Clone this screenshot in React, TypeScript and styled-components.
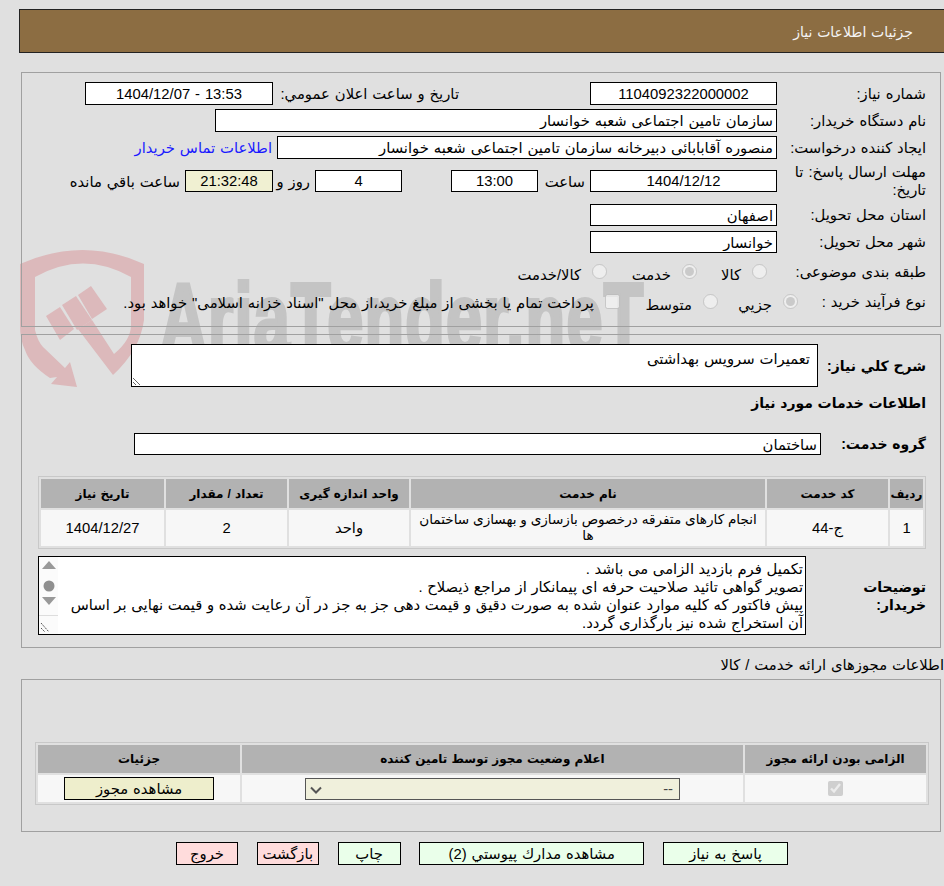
import React from "react";
import styled, { createGlobalStyle } from "styled-components";

const Global = createGlobalStyle`
  html {
    background: #e0e0e0;
  }
  html, body {
    margin: 0;
    height: 886px;
    overflow: hidden;
  }
  body {
    color: #000;
    font-family: "Liberation Sans", "DejaVu Sans", sans-serif;
    font-size: 14.8px;
    word-spacing: 0.8px;
  }
`;

const Page = styled.div`
  direction: rtl;
  width: 944px;
  height: 886px;
  padding-top: 9px;
  box-sizing: border-box;
`;

const Watermark = styled.div`
  position: absolute;
  left: 20px;
  top: 250px;
  width: 600px;
  height: 140px;
  z-index: -1;
  direction: ltr;
`;

const WatermarkText = styled.div`
  position: absolute;
  left: 140px;
  top: 19px;
  font: bold 98px/98px "Liberation Sans", sans-serif;
  color: #c4c4c4;
  -webkit-text-stroke: 4px #c4c4c4;
  letter-spacing: 2px;
  white-space: nowrap;
  transform: scaleX(0.66);
  transform-origin: left top;
`;

const Header = styled.div`
  height: 42px;
  margin-left: 19px;
  padding-right: 31px;
  font-size: 14px;
  line-height: 44px;
  background: #8c6d42;
  border: 1px solid #222;
  border-right: 0;
  color: #f4f4f4;
`;

const Panel = styled.div<{ $top: number; $height: number }>`
  box-sizing: border-box;
  height: ${(p) => p.$height}px;
  margin: ${(p) => p.$top}px 3px 0 21px;
  padding: 9px 14px 0 0;
  border: 1px solid #a0a0a0;
`;

const NeedPanel = styled(Panel)`
  padding-left: 16px;
`;

const PermitPanel = styled(Panel)`
  padding: 62px 11px 0 13px;
`;

const Row = styled.div<{ $height?: number; $mb?: number; $mt?: number }>`
  display: flex;
  align-items: center;
  height: ${(p) => p.$height ?? 23}px;
  margin-top: ${(p) => p.$mt ?? 0}px;
  margin-bottom: ${(p) => p.$mb ?? 4}px;
`;

const Label = styled.label<{ $width?: number; $mr?: number }>`
  flex: none;
  width: ${(p) => p.$width ?? 149}px;
  margin-right: ${(p) => p.$mr ?? 0}px;
  line-height: 18px;
`;

const BoldLabel = styled(Label)`
  font-size: 14px;
  font-weight: bold;
`;

const Text = styled.span<{ $mr?: number; $width?: number }>`
  flex: none;
  width: ${(p) => (p.$width ? `${p.$width}px` : "auto")};
  margin-right: ${(p) => p.$mr ?? 0}px;
  white-space: nowrap;
`;

const Link = styled(Text)`
  color: #1a1aff;
`;

const Field = styled.input<{
  $width: number;
  $center?: boolean;
  $bg?: string;
  $mr?: number;
}>`
  flex: none;
  box-sizing: border-box;
  width: ${(p) => p.$width}px;
  height: 100%;
  margin: 0 ${(p) => p.$mr ?? 0}px 0 0;
  padding: 0 3px;
  border: 1px solid #000;
  background: ${(p) => p.$bg ?? "#fff"};
  color: #000;
  font: inherit;
  word-spacing: inherit;
  text-align: ${(p) => (p.$center ? "center" : "right")};
  outline: none;
`;

const Options = styled.div<{ $mr?: number }>`
  display: flex;
  margin-right: ${(p) => p.$mr ?? 0}px;
`;

const Option = styled.label<{ $width: number }>`
  flex: none;
  display: flex;
  align-items: center;
  width: ${(p) => p.$width}px;
`;

const OptionText = styled(Text)`
  margin-top: 5px;
`;

const Radio = styled.input`
  flex: none;
  width: 15px;
  height: 15px;
  margin: 0 0 2px 11px;
`;

const Check = styled.input`
  flex: none;
  width: 15px;
  height: 15px;
  margin: 0 0 2px 11px;
`;

const CellCheck = styled.input`
  display: block;
  width: 15px;
  height: 15px;
  margin: 0 auto;
`;

const Note = styled.textarea`
  flex: none;
  box-sizing: border-box;
  width: 687px;
  height: 43px;
  margin-right: 5px;
  padding: 5px 7px;
  border: 1px solid #000;
  border-radius: 0;
  background: #fff;
  font: inherit;
  word-spacing: inherit;
  line-height: 18px;
  outline: none;
`;

const Heading = styled.div`
  height: 24px;
  font-size: 14px;
  font-weight: bold;
  line-height: 24px;
`;

const Grid = styled.table<{ $mt: number }>`
  width: 100%;
  margin-top: ${(p) => p.$mt}px;
  border: 1px solid #c8c8c8;
  border-spacing: 2px;
  table-layout: fixed;
  text-align: center;
`;

const Th = styled.th<{ $width?: number; $height?: number }>`
  width: ${(p) => (p.$width ? `${p.$width}px` : "auto")};
  height: ${(p) => p.$height ?? 29}px;
  padding: 0;
  background: #b2b2b2;
  font-size: 12px;
`;

const Td = styled.td`
  height: 36px;
  padding: 0 4px;
  background: #f7f7f7;
  line-height: 16px;
`;

const NameTd = styled(Td)`
  font-size: 13.6px;
  word-spacing: 0;
`;

const PermitTd = styled(Td)`
  height: 27px;
  padding: 0;
`;

const DescRow = styled.div`
  display: flex;
  align-items: center;
  margin-top: 7px;
`;

const DescBox = styled.div`
  flex: none;
  display: flex;
  box-sizing: border-box;
  width: 768px;
  height: 79px;
  border: 1px solid #000;
  background: #fff;
`;

const DescText = styled.div`
  flex: 1;
  padding: 3px 2px 0 0;
  line-height: 18px;
  word-spacing: 0.5px;
  white-space: nowrap;
  overflow: hidden;
`;

const Scroll = styled.div`
  flex: none;
  width: 19px;
  background: #fbfbfb;
`;

const ScrollIcons = styled.svg`
  display: block;
`;

const Section = styled.div`
  height: 18px;
  margin-top: 8px;
  line-height: 18px;
  white-space: nowrap;
`;

const SelectBox = styled.select`
  display: block;
  appearance: none;
  box-sizing: border-box;
  width: 375px;
  height: 22px;
  margin: 0 auto;
  padding: 0 6px;
  border: 1px solid #555;
  border-radius: 0;
  background-color: #f0f0dc;
  background-image: url("data:image/svg+xml,%3Csvg xmlns='http://www.w3.org/2000/svg' width='12' height='8'%3E%3Cpath d='M1 1.5L6 6.5L11 1.5' fill='none' stroke='%23555' stroke-width='2'/%3E%3C/svg%3E");
  background-repeat: no-repeat;
  background-position: 4px 7px;
  color: #444;
  font: inherit;
  opacity: 1;
`;

const PermitButton = styled.button`
  display: block;
  box-sizing: border-box;
  width: 150px;
  height: 23px;
  margin: 0 auto;
  padding: 0;
  border: 1px solid #000;
  background: #eeeecc;
  color: #000;
  font: inherit;
  word-spacing: inherit;
`;

const Actions = styled.div`
  display: flex;
  gap: 18.75px;
  margin: 10px 156px 0 0;
`;

const Action = styled.button<{ $width: number; $danger?: boolean }>`
  flex: none;
  box-sizing: border-box;
  width: ${(p) => p.$width}px;
  height: 23px;
  padding: 0;
  border: 1px solid #000;
  background: ${(p) => (p.$danger ? "#ffdcdc" : "#eaffea")};
  color: #000;
  font: inherit;
  word-spacing: inherit;
`;

export default function App() {
  return (
    <>
      <Global />
      <Page>
        <Watermark>
          <svg width="125" height="138" viewBox="20 250 125 138">
            <path
              fill="#dcb9bb"
              d="M20 264Q83 236 144 264L144 320Q140 350 113 375L78 329L92 320L114 354Q131 340 131 325L131 277Q83 250 35 277L35 330Q38 342 43 347L65 368L70 362L77 387L51 384L57 377L50 378Q30 365 25 350Q20 340 20 325Z"
            />
            <path fill="#dcb9bb" d="M46 316L60 307L74 329L60 340Z" />
            <path fill="#dcb9bb" d="M62 305L76 296L92 320L77 330Z" />
            <path fill="#dcb9bb" d="M78 295L91 286L107 309L92 319Z" />
          </svg>
          <WatermarkText>AriaTender.neT</WatermarkText>
        </Watermark>

        <Header>جزئیات اطلاعات نیاز</Header>

        <Panel $top={19} $height={255}>
          <Row>
            <Label>شماره نیاز:</Label>
            <Field readOnly $width={187} $center value="1104092322000002" />
            <Label $width={181} $mr={131}>
              تاریخ و ساعت اعلان عمومي:
            </Label>
            <Field readOnly $width={188} $mr={5} $center value="13:53 - 1404/12/07" />
          </Row>
          <Row>
            <Label>نام دستگاه خریدار:</Label>
            <Field readOnly $width={562} value="سازمان تامین اجتماعی شعبه خوانسار" />
          </Row>
          <Row $mb={11}>
            <Label>ایجاد کننده درخواست:</Label>
            <Field
              readOnly
              $width={500}
              value="منصوره آقابابائی دبیرخانه سازمان تامین اجتماعی شعبه خوانسار"
            />
            <Link $mr={5}>اطلاعات تماس خریدار</Link>
          </Row>
          <Row $height={22} $mb={12}>
            <Label>مهلت ارسال پاسخ: تا تاریخ:</Label>
            <Field readOnly $width={187} $center value="1404/12/12" />
            <Text $mr={5} $width={47}>ساعت</Text>
            <Field readOnly $width={87} $center value="13:00" />
            <Field readOnly $width={87} $mr={49} $center value="4" />
            <Text $mr={5} $width={37}>روز و</Text>
            <Field readOnly $width={88} $center $bg="#f0f0d2" value="21:32:48" />
            <Text $mr={5}>ساعت باقي مانده</Text>
          </Row>
          <Row $height={22} $mb={5}>
            <Label>استان محل تحویل:</Label>
            <Field readOnly $width={187} value="اصفهان" />
          </Row>
          <Row $height={22} $mb={8}>
            <Label>شهر محل تحویل:</Label>
            <Field readOnly $width={187} value="خوانسار" />
          </Row>
          <Row $height={22} $mb={8}>
            <Label>طبقه بندی موضوعی:</Label>
            <Options $mr={10}>
              <Option $width={70}>
                <Radio type="radio" disabled />
                <OptionText>کالا</OptionText>
              </Option>
              <Option $width={90}>
                <Radio type="radio" disabled checked readOnly />
                <OptionText>خدمت</OptionText>
              </Option>
              <Option $width={100}>
                <Radio type="radio" disabled />
                <OptionText>کالا/خدمت</OptionText>
              </Option>
            </Options>
          </Row>
          <Row $height={22} $mb={0}>
            <Label $width={128}>نوع فرآیند خرید :</Label>
            <Options>
              <Option $width={80}>
                <Radio type="radio" disabled checked readOnly />
                <OptionText>جزيي</OptionText>
              </Option>
              <Option $width={98}>
                <Radio type="radio" disabled />
                <OptionText>متوسط</OptionText>
              </Option>
              <Option $width={500}>
                <Check type="checkbox" disabled />
                <Text>پرداخت تمام یا بخشی از مبلغ خرید،از محل "اسناد خزانه اسلامی" خواهد بود.</Text>
              </Option>
            </Options>
          </Row>
        </Panel>

        <NeedPanel $top={7} $height={314}>
          <Row $height={43} $mb={4}>
            <BoldLabel $width={103}>شرح كلي نياز:</BoldLabel>
            <Note readOnly defaultValue="تعمیرات سرویس بهداشتی" />
          </Row>
          <Heading>اطلاعات خدمات مورد نياز</Heading>
          <Row $height={22} $mb={0} $mt={18}>
            <BoldLabel $width={105}>گروه خدمت:</BoldLabel>
            <Field readOnly $width={687} value="ساختمان" />
          </Row>
          <Grid $mt={21}>
            <thead>
              <tr>
                <Th $width={33}>رديف</Th>
                <Th $width={121}>کد خدمت</Th>
                <Th $width={354}>نام خدمت</Th>
                <Th $width={120}>واحد اندازه گيری</Th>
                <Th $width={121}>تعداد / مقدار</Th>
                <Th>تاريخ نياز</Th>
              </tr>
            </thead>
            <tbody>
              <tr>
                <Td>1</Td>
                <Td>ج-44</Td>
                <NameTd>انجام کارهای متفرقه درخصوص بازسازی و بهسازی ساختمان ها</NameTd>
                <Td>واحد</Td>
                <Td>2</Td>
                <Td>1404/12/27</Td>
              </tr>
            </tbody>
          </Grid>
          <DescRow>
            <BoldLabel $width={120}>
              توضيحات
              <br />
              خريدار:
            </BoldLabel>
            <DescBox>
              <DescText>
                تکمیل فرم بازدید الزامی می باشد .
                <br />
                تصویر گواهی تائید صلاحیت حرفه ای پیمانکار از مراجع ذیصلاح .
                <br />
                پیش فاکتور که کلیه موارد عنوان شده به صورت دقیق و قیمت دهی جز به جز در آن رعایت شده و قیمت نهایی بر اساس
                <br />
                آن استخراج شده نیز بارگذاری گردد.
              </DescText>
              <Scroll>
                <ScrollIcons width="19" height="77" viewBox="0 0 19 77">
                  <path d="M3 12L10 4L17 12Z" fill="#999" />
                  <circle cx="10" cy="29" r="5.5" fill="#8f8f8f" />
                  <path d="M3 40L17 40L10 48Z" fill="#999" />
                  <path d="M0 58.5H19" stroke="#ddd" />
                  <path d="M2 66L10 75M2 71L6 75" stroke="#555" strokeDasharray="2 1" />
                </ScrollIcons>
              </Scroll>
            </DescBox>
          </DescRow>
        </NeedPanel>

        <Section>اطلاعات مجوزهای ارائه خدمت / کالا</Section>

        <PermitPanel $top={5} $height={153}>
          <Grid $mt={0}>
            <thead>
              <tr>
                <Th $width={181} $height={28}>الزامی بودن ارائه مجوز</Th>
                <Th $width={501} $height={28}>اعلام وضعیت مجوز توسط تامین کننده</Th>
                <Th $height={28}>جزئیات</Th>
              </tr>
            </thead>
            <tbody>
              <tr>
                <PermitTd>
                  <CellCheck type="checkbox" disabled checked readOnly />
                </PermitTd>
                <PermitTd>
                  <SelectBox disabled>
                    <option>--</option>
                  </SelectBox>
                </PermitTd>
                <PermitTd>
                  <PermitButton>مشاهده مجوز</PermitButton>
                </PermitTd>
              </tr>
            </tbody>
          </Grid>
        </PermitPanel>

        <Actions>
          <Action $width={125}>پاسخ به نياز</Action>
          <Action $width={225}>مشاهده مدارك پیوستي (2)</Action>
          <Action $width={63}>چاپ</Action>
          <Action $width={62} $danger>بازگشت</Action>
          <Action $width={62} $danger>خروج</Action>
        </Actions>
      </Page>
    </>
  );
}
